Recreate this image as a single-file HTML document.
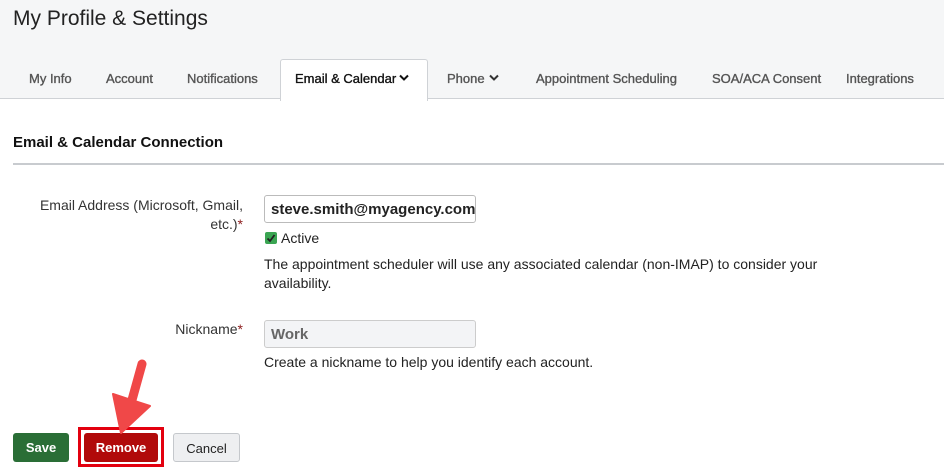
<!DOCTYPE html><html><head><style>
body{margin:0;width:944px;height:472px;background:#fff;font-family:"Liberation Sans",sans-serif;color:#222;position:relative;overflow:hidden}
.hdr{position:absolute;left:0;top:0;width:944px;height:98px;background:#f5f6f7;border-bottom:1px solid #cfd2d6}
.a{position:absolute;white-space:nowrap}
.tab{position:absolute;top:71px;font-size:13px;color:#555;-webkit-text-stroke:0.35px #555}
.act{position:absolute;left:280px;top:59px;width:146px;height:41px;background:#fff;border:1px solid #cfd2d6;border-bottom:none;border-radius:3px 3px 0 0}
.lbl{font-size:14px;color:#333;text-align:right}
.inp{position:absolute;left:264px;width:212px;height:28px;border:1px solid #bbb;border-radius:3px;box-sizing:border-box}
.btn{position:absolute;top:433px;height:29px;border-radius:3px;font-size:13px;text-align:center;line-height:29px;box-sizing:border-box}
</style></head><body>
<div class="hdr"></div>
<div class="a" style="left:13px;top:7px;font-size:21px;color:#222">My Profile &amp; Settings</div>
<div class="act"></div>
<div class="tab" style="left:29px">My Info</div>
<div class="tab" style="left:106px">Account</div>
<div class="tab" style="left:187px">Notifications</div>
<div class="tab" style="left:295px;color:#111;-webkit-text-stroke:0.35px #111">Email &amp; Calendar</div>
<svg class="a" style="left:398px;top:74px" width="12" height="8"><path d="M2 1.5L6 5.5L10 1.5" stroke="#111" stroke-width="2" fill="none"/></svg>
<div class="tab" style="left:447px">Phone</div>
<svg class="a" style="left:488px;top:74px" width="12" height="8"><path d="M2 1.5L6 5.5L10 1.5" stroke="#333" stroke-width="2" fill="none"/></svg>
<div class="tab" style="left:536px">Appointment Scheduling</div>
<div class="tab" style="left:712px">SOA/ACA Consent</div>
<div class="tab" style="left:846px">Integrations</div>
<div class="a" style="left:13px;top:134px;font-size:15px;font-weight:bold;color:#111">Email &amp; Calendar Connection</div>
<div class="a" style="left:13px;top:163px;width:931px;height:2px;background:#c8cbcf"></div>
<div class="a lbl" style="left:30px;top:196px;width:213px;line-height:19px;white-space:normal">Email Address (Microsoft, Gmail, etc.)<span style="color:#8b1a1a">*</span></div>
<div class="inp" style="top:195px;font-size:15px;font-weight:bold;padding:5px 6px;overflow:hidden;white-space:nowrap">steve.smith@myagency.com</div>
<div class="a" style="left:265px;top:232px;width:12px;height:12px;background:#3aa552;border-radius:2px"></div>
<svg class="a" style="left:265px;top:232px" width="12" height="12"><path d="M2.5 6.5L5 9L9.5 3" stroke="#222" stroke-width="1.8" fill="none"/></svg>
<div class="a" style="left:281px;top:230px;font-size:14px">Active</div>
<div class="a" style="left:264px;top:255px;font-size:14px;line-height:19px;white-space:normal;width:580px">The appointment scheduler will use any associated calendar (non-IMAP) to consider your availability.</div>
<div class="a lbl" style="left:120px;top:321px;width:123px">Nickname<span style="color:#8b1a1a">*</span></div>
<div class="inp" style="top:320px;background:#f3f4f6;border-color:#ccc;font-size:15px;font-weight:bold;color:#666;padding:5px 6px">Work</div>
<div class="a" style="left:264px;top:354px;font-size:14px">Create a nickname to help you identify each account.</div>
<div class="btn" style="left:13px;width:56px;background:#2a6e36;color:#fff;font-weight:bold">Save</div>
<div class="a" style="left:78px;top:427px;width:86px;height:40px;border:3px solid #e3000f;box-sizing:border-box"></div>
<div class="btn" style="left:84px;width:74px;background:#b10a0a;color:#fff;font-weight:bold">Remove</div>
<div class="btn" style="left:173px;width:67px;background:#eeeff1;border:1px solid #c5c8cc;color:#222">Cancel</div>
<svg class="a" style="left:100px;top:350px" width="60" height="90"><path d="M42 14L32 50" stroke="#f04848" stroke-width="9" stroke-linecap="round"/><path d="M13 44L50 56L21 83Z" fill="#f04848" stroke="#f04848" stroke-width="2" stroke-linejoin="round"/></svg>
</body></html>
